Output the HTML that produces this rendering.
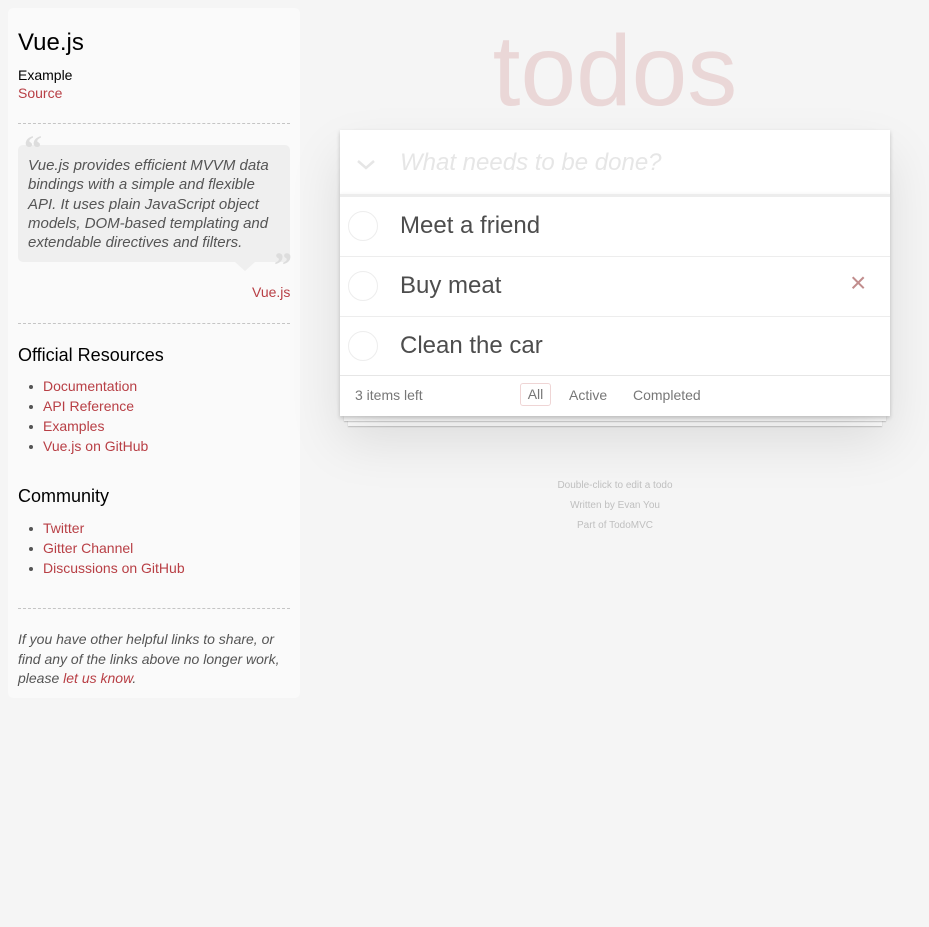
<!DOCTYPE html>
<html><head><meta charset="utf-8"><style>
*{margin:0;padding:0;box-sizing:border-box}
body{width:929px;height:927px;background:#f5f5f5;font-family:"Liberation Sans",sans-serif;position:relative;overflow:hidden}
.a{position:absolute;white-space:nowrap}
.side{position:absolute;left:8px;top:8px;width:292px;height:690px;background:#fafafa;border-radius:5px}
.red{color:#b83f45}
.hr{position:absolute;left:18px;width:272px;border-top:1px dashed #c5c5c5;height:0}
.q{position:absolute;left:18px;top:145px;width:272px;height:117px;background:#efefef;border-radius:5px}
.qt{position:absolute;left:28px;top:156px;font-style:italic;font-size:15px;line-height:19.3px;color:#555;width:245px}
li{position:absolute;left:43px;font-size:14px;color:#b83f45;list-style:none}
li:before{content:"";position:absolute;left:-14px;top:7px;width:4px;height:4px;border-radius:50%;background:#555}
.box{position:absolute;left:340px;top:130px;width:550px;height:286px;background:#fff;box-shadow:0 2px 4px rgba(0,0,0,.2),0 25px 50px rgba(0,0,0,.1)}
.st{position:absolute;background:#fff;box-shadow:0 1px 1px rgba(0,0,0,.2)}
.row{position:absolute;left:0;width:550px;height:60px;border-top:1px solid #ededed}
.c{position:absolute;left:8px;top:14px;width:30px;height:30px;border:1px solid #ededed;border-radius:50%}
.t{position:absolute;left:60px;top:15px;font-size:24px;color:#4d4d4d}
.info{position:absolute;left:340px;width:550px;text-align:center;font-size:10px;color:#bfbfbf}
</style></head><body>
<div class="side"></div>
<div class="a" style="left:18px;top:29px;font-size:24px;color:#000">Vue.js</div>
<div class="a" style="left:18px;top:67px;font-size:14px;color:#000">Example</div>
<div class="a red" style="left:18px;top:85px;font-size:14px">Source</div>
<div class="hr" style="top:123px"></div>
<div class="q"></div>
<div style="position:absolute;left:235px;top:262px;width:0;height:0;border-left:10px solid transparent;border-right:10px solid transparent;border-top:9px solid #efefef"></div>
<div class="a" style="left:24px;top:127px;font-size:36px;font-family:'Liberation Serif',serif;color:#ddd;font-weight:bold">“</div>
<div class="a" style="left:274px;top:244px;font-size:36px;font-family:'Liberation Serif',serif;color:#ddd;font-weight:bold">”</div>
<div class="qt">Vue.js provides efficient MVVM data bindings with a simple and flexible API. It uses plain JavaScript object models, DOM-based templating and extendable directives and filters.</div>
<div class="a red" style="left:252px;top:284px;font-size:14px">Vue.js</div>
<div class="hr" style="top:323px"></div>
<div class="a" style="left:18px;top:345px;font-size:18px;color:#000">Official Resources</div>
<ul><li style="top:378px">Documentation</li><li style="top:398px">API Reference</li><li style="top:418px">Examples</li><li style="top:438px">Vue.js on GitHub</li></ul>
<div class="a" style="left:18px;top:486px;font-size:18px;color:#000">Community</div>
<ul><li style="top:520px">Twitter</li><li style="top:540px">Gitter Channel</li><li style="top:560px">Discussions on GitHub</li></ul>
<div class="hr" style="top:608px"></div>
<div style="position:absolute;left:18px;top:630px;width:275px;font-size:14px;line-height:19.5px;font-style:italic;color:#555">If you have other helpful links to share, or find any of the links above no longer work, please <span class="red">let us know</span>.</div>

<div class="a" style="left:340px;width:550px;text-align:center;top:14px;font-size:100px;font-weight:100;color:rgba(175,47,47,.15)">todos</div>
<div class="st" style="left:348px;top:416px;width:534px;height:10px"></div>
<div class="st" style="left:344px;top:416px;width:542px;height:5px"></div>
<div class="box">
<svg style="position:absolute;left:16px;top:29px" width="20" height="12"><path d="M2 2 L10 9 L18 2" stroke="#e6e6e6" stroke-width="2.5" fill="none"/></svg>
<div class="a" style="left:60px;top:19px;font-size:24px;font-style:italic;color:#e6e6e6">What needs to be done?</div>
<div style="position:absolute;left:0;top:64px;width:550px;height:2px;background:#ededed;box-shadow:0 -1px 2px rgba(0,0,0,.03)"></div>
<div class="row" style="top:66px"><div class="c"></div><div class="t">Meet a friend</div></div>
<div class="row" style="top:126px"><div class="c"></div><div class="t">Buy meat</div><div class="a" style="left:510px;top:10px;font-size:28px;color:#c18d8d">×</div></div>
<div class="row" style="top:186px"><div class="c"></div><div class="t">Clean the car</div></div>
<div class="row" style="top:245px;height:41px;border-top:1px solid #e6e6e6">
<div class="a" style="left:15px;top:11px;font-size:14px;color:#777">3 items left</div>
<div class="a" style="left:180px;top:7px;height:23px;width:31px;border:1px solid rgba(175,47,47,.2);border-radius:3px;font-size:14px;color:#777;text-align:center;line-height:21px">All</div>
<div class="a" style="left:229px;top:11px;font-size:14px;color:#777">Active</div>
<div class="a" style="left:293px;top:11px;font-size:14px;color:#777">Completed</div>
</div>
</div>
<div class="info" style="top:480px">Double-click to edit a todo</div>
<div class="info" style="top:500px">Written by Evan You</div>
<div class="info" style="top:520px">Part of TodoMVC</div>
</body></html>
